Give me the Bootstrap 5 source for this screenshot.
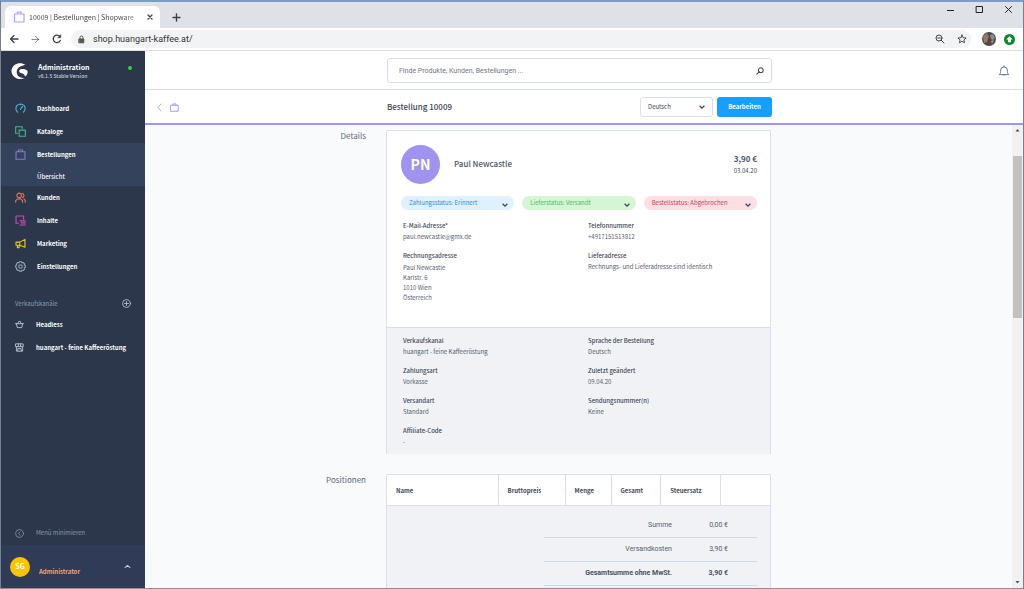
<!DOCTYPE html>
<html lang="de">
<head>
<meta charset="utf-8">
<meta name="viewport" content="width=device-width, initial-scale=1">
<title>10009 | Bestellungen | Shopware</title>
<link rel="stylesheet" href="https://cdn.jsdelivr.net/npm/bootstrap@5.3.0/dist/css/bootstrap.min.css">
<style>
:root { --ink: #3d4758; --muted-ink: #566070; --line: #d8dfe8; --violet: #a092f0; --navy: #2c374c; }
html { height: 100%; }
body { height: 100%; margin: 0; overflow: hidden; font: 400 6px/11px "Noto Sans CJK JP", "Open Sans", sans-serif; color: var(--ink); background: #fff; border: 1px solid #73808f; border-top: 2px solid #7b9cc4; border-bottom-color: #8d8f92; fill: none; stroke: currentColor; stroke-linecap: round; stroke-linejoin: round; }
a { color: inherit; text-decoration: none; }
button { background: none; border: 0; padding: 0; color: inherit; font: inherit; line-height: 1; }
svg { display: block; }
.chrome-ui { font-family: Roboto, sans-serif; color: #3c4043; }
.tabstrip { height: 26px; background: #dee1e6; padding-left: 4px; }
.browser-tab { width: 155px; height: 22px; background: #fff; border-radius: 6px 6px 0 0; padding: 0 7px 0 8px; }
.tab-title { font: 7px/12px "Noto Sans CJK JP", sans-serif; padding-left: 4px; color: #45484c; -webkit-mask-image: linear-gradient(90deg, #000 82%, rgba(0,0,0,.3)); mask-image: linear-gradient(90deg, #000 82%, rgba(0,0,0,.3)); }
.win-controls { gap: 20px; padding: 3px 10px 0 0; color: #222; }
.toolbar { height: 23px; padding: 0 8px 0 8px; border-bottom: 1px solid #dcdde0; }
.address { height: 18px; border-radius: 9px; background: #f1f3f4; padding: 0 4px 0 7px; margin: 0 11px 0 9px; }
.address input { font-size: 9px; line-height: 14px; color: #333; background: none; border: 0; padding: 0; outline: 0; }
.sidebar { width: 144px; background: var(--navy); color: #fff; font-weight: 700; flex: none; }
.brand { height: 46px; padding: 11px 13px 0 10px; gap: 10px; }
.brand-name { font-size: 7px; line-height: 10px; }
.version { font-size: 5px; line-height: 7px; font-weight: 500; color: #c6cfdb; }
.online { width: 4px; height: 4px; border-radius: 50%; background: #37d046; margin-top: 4px; }
.menu a { display: flex; align-items: center; height: 23px; padding-left: 14px; gap: 11px; }
.menu a svg { width: 11px; height: 11px; stroke-width: 1.6; }
.menu .current { background: #35425b; }
.menu .current .sub { height: 20px; padding-left: 36px; font-weight: 500; }
.channels { margin-top: 16px; }
.channels-head { height: 19px; padding: 0 14px; color: #8a9cb3; font-weight: 400; }
.channels .menu a svg { width: 9px; height: 9px; }
.channels .menu a { gap: 12px; }
.minimize { height: 24px; padding-left: 14px; color: #8a97aa; }
.userbar { height: 43px; background: #303b57; padding: 0 14px 0 9px; }
.user-badge { width: 20px; height: 20px; border-radius: 50%; background: #fcc400; font-size: 7px; }
.user-role { color: #f0a373; font-weight: 700; padding: 9px 0 0 9px; }
.split { display: grid; grid-template-columns: minmax(60px, 1fr) minmax(0, 385px) minmax(20px, 1fr); }
.head-row { padding-right: 9px; align-items: center; }
.searchbar { height: 41px; padding-top: 1px; border-bottom: 1px solid var(--line); }
.search-box { height: 25px; border: 1px solid var(--line); border-radius: 3px; padding: 0 7px 0 11px; }
.search-box input { border: 0; outline: 0; padding: 0; background: none; font: 7px/12px Roboto, sans-serif; color: var(--ink); }
.search-box input::placeholder { color: #6e7784; opacity: 1; }
.pagebar { height: 36px; padding-top: 1px; border-bottom: 2px solid var(--violet); }
.page-title { font-size: 8px; line-height: 12px; font-weight: 500; margin: 0; }
.form-select { background-image: url("data:image/svg+xml,%3Csvg xmlns='http://www.w3.org/2000/svg' viewBox='0 0 10 10'%3E%3Cpath d='M2 3.5l3 3 3-3' fill='none' stroke='%233d4758' stroke-width='1.6'/%3E%3C/svg%3E"); background-size: 8px 8px; font: inherit; color: inherit; line-height: 10px; box-shadow: none; }
.lang { width: 73px; height: 20px; border: 1px solid var(--line); border-radius: 3px; padding: 0 12px 1px 7px; background-position: right 6px center; }
.btn-edit { width: 55px; height: 20px; border-radius: 3px; background: #189eff; color: #fff; font-weight: 700; }
.canvas { background: #f9fafc; }
.side-label { font-size: 8px; line-height: 12px; text-align: right; padding-right: 20px; color: #5b6778; margin: 0; font-weight: 400; }
.sections { display: flex; flex-direction: column; gap: 20px; padding-top: 5px; }
.panel { border: 1px solid var(--line); border-bottom: 0; border-radius: 2px 2px 0 0; background: #fff; }
.customer { padding: 14px 13px 0 14px; }
.avatar { width: 39px; height: 39px; border-radius: 50%; background: var(--violet); color: #fff; font-size: 14px; line-height: 20px; font-weight: 700; }
.customer-name { font-size: 8px; line-height: 12px; font-weight: 500; padding-left: 14px; color: #4a5567; }
.amount { font-size: 8px; line-height: 12px; font-weight: 700; color: #4a5567; }
.status-row { display: grid; grid-template-columns: repeat(3, 1fr); gap: 8px; margin-top: 12px; }
.status { height: 14px; border: 0; border-radius: 7px; padding: 0 14px 0 8px; background-position: right 5px top 5px; line-height: 14px; }
.st-open { background-color: #dff1fe; color: #2e8edc; }
.st-done { background-color: #d5f5d7; color: #4dbb62; }
.st-cancel { background-color: #fbdfe4; color: #cc3d55; }
.facts { display: grid; grid-template-columns: 1fr 1fr; gap: 8px 3px; margin: 0; padding-left: 16px; color: var(--muted-ink); }
.facts dt { font-weight: 500; color: var(--ink); }
.facts dd { margin: 0; }
.facts-main { padding-top: 10px; padding-bottom: 24px; }
.facts-more { padding-top: 7px; padding-bottom: 7px; background: #f0f2f5; border-top: 1px solid var(--line); }
.postal { line-height: 10px; padding-top: 2px; }
.positions th { font-weight: 700; height: 31px; padding: 0 0 0 9px; vertical-align: middle; border-right: 1px solid var(--line); border-bottom: 1px solid var(--line); }
.positions th:last-child { border-right: 0; }
.sums-area { background: #f0f2f5; padding: 7px 13px 24px 0; }
.sums { width: 213px; text-align: right; font: 7px/12px Roboto, sans-serif; color: var(--muted-ink); }
.sums th, .sums td { height: 24px; padding: 0; vertical-align: middle; border-bottom: 1px solid #cfd7e1; font-weight: inherit; }
.sums td { width: 85px; padding-right: 29px; }
.sums .total { font-weight: 700; color: #465164; }
.scroll-track { width: 11px; background: #f1f1f1; flex: none; color: #505050; }
.scroll-thumb { width: 9px; background: #c1c1c1; }
</style>
<script src="https://cdn.jsdelivr.net/npm/bootstrap@5.3.0/dist/js/bootstrap.bundle.min.js" defer></script>
</head>
<body class="d-flex flex-column">
<header class="chrome-ui">
  <div class="tabstrip d-flex">
    <div class="browser-tab d-flex align-items-center align-self-end">
      <svg width="12" height="12" viewBox="0 0 12 12" stroke="#b0a3ee" stroke-width="1.200" class="flex-shrink-0"><path d="M1.500 3h9.500v8H1.500zM4.200 3V1.200h4V3"/></svg>
      <span class="tab-title flex-grow-1 text-nowrap">10009 | Bestellungen | Shopware</span>
      <button class="ms-1" aria-label="Tab schließen"><svg width="6" height="6" viewBox="0 0 6 6" stroke-width="1.300"><path d="M1 1l4 4M5 1L1 5"/></svg></button>
    </div>
    <button class="ms-2 ps-1 pt-1" aria-label="Neuer Tab"><svg width="9" height="9" viewBox="0 0 9 9" stroke-width="1.400"><path d="M4.500 1v7M1 4.500h7"/></svg></button>
    <div class="win-controls d-flex ms-auto align-items-start">
      <button aria-label="Minimieren"><svg width="9" height="9" viewBox="0 0 9 9" stroke-linecap="butt"><path d="M1 5.500h7"/></svg></button>
      <button aria-label="Maximieren"><svg width="9" height="9" viewBox="0 0 9 9"><path d="M1.500 1.500h6v6h-6z"/></svg></button>
      <button aria-label="Schließen"><svg width="9" height="9" viewBox="0 0 9 9"><path d="M1.500 1.500l6 6M7.500 1.500l-6 6"/></svg></button>
    </div>
  </div>
  <div class="toolbar d-flex align-items-center">
    <button aria-label="Zurück"><svg width="10" height="10" viewBox="0 0 10 10" stroke-width="1.300"><path d="M9 5H1.500M5 1.500L1.500 5 5 8.500"/></svg></button>
    <button class="ms-2 ps-1 text-black-50" aria-label="Vor"><svg width="9" height="9" viewBox="0 0 10 10" stroke-width="1"><path d="M1 5h7.500M5 1.500L8.500 5 5 8.500"/></svg></button>
    <button class="ms-2 ps-1" aria-label="Neu laden"><svg width="10" height="10" viewBox="0 0 10 10" stroke-width="1.300"><path d="M8.300 6.500A3.700 3.700 0 1 1 7.800 2.500"/><path d="M8.800.8v3h-3z" fill="currentColor" stroke-width=".4"/></svg></button>
    <div class="address d-flex align-items-center flex-grow-1">
      <svg width="7" height="9" viewBox="0 0 7 9" stroke="#555"><path d="M1.200 4h4.600v3.800H1.200z" fill="#555"/><path d="M2 4V2.500a1.500 1.500 0 0 1 3 0V4"/></svg>
      <input class="flex-grow-1 ms-1 ps-1" type="text" value="shop.huangart-kaffee.at/" aria-label="Adresse">
      <button aria-label="Zoom"><svg width="10" height="10" viewBox="0 0 10 10"><circle cx="4" cy="4" r="3"/><path d="M6.300 6.300L9 9M2.800 4h2.400"/></svg></button>
      <button class="ms-2 ps-1" aria-label="Lesezeichen"><svg width="10" height="10" viewBox="0 0 10 10" stroke-width=".9"><path d="M5 1l1.200 2.700 2.900.3-2.200 1.900.7 2.900L5 7.300 2.400 8.800l.7-2.900L.9 4l2.900-.3z"/></svg></button>
    </div>
    <svg width="14" height="14" viewBox="0 0 14 14" stroke="none"><circle cx="7" cy="7" r="7" fill="#4b4c4a"/><path d="M1 4l4-3 2 4-2 5-3 1z" fill="#927b6b"/><path d="M8 3l3-1 2 4-2 2-2-1z" fill="#7895a6"/><path d="M6 6l2-1 2 5-2 3H5z" fill="#6c3f36"/><path d="M9 9l3-1-2 4z" fill="#a79a8a"/></svg>
    <svg class="ms-2" width="11" height="11" viewBox="0 0 11 11" stroke="none"><circle cx="5.500" cy="5.500" r="5.500" fill="#0b8a2c"/><path d="M5.500 2.300L8.700 5.500H7v2.800H4V5.500H2.300z" fill="#fff"/></svg>
  </div>
</header>
<div class="d-flex flex-grow-1 overflow-hidden">
  <aside class="sidebar d-flex flex-column">
    <div class="brand d-flex align-items-start">
      <svg width="17" height="18" viewBox="0 0 34 36" fill="#fff" stroke="none"><path d="M29 6C23 1 13 1 7 6-1 12-1 24 7 30c6 5 14 5 20 2-7 0-13-2-15-8-2-7 1-13 9-16 3-1 6-2 8-2z"/><path d="M33 18c-3-4-11-5-15-3-3 2-2 6 2 7 4 1 7 2 8 7 4-2 6-7 5-11z"/></svg>
      <div class="flex-grow-1"><div class="brand-name">Administration</div><div class="version">v6.1.5 Stable Version</div></div>
      <span class="online"></span>
    </div>
    <nav class="menu">
      <a href="#"><svg viewBox="0 0 16 16" stroke="#4db3cf"><path d="M4 13.500a6.700 6.700 0 1 1 8 0M8 9l3-4M8 1.500v1"/></svg>Dashboard</a>
      <a href="#"><svg viewBox="0 0 16 16" stroke="#3fb98c"><path d="M6 6h9v9H6zM3.500 10.500H1V1h9.500v2.500"/></svg>Kataloge</a>
      <div class="current">
        <a href="#"><svg viewBox="0 0 16 16" stroke="#8579cf"><path d="M1.500 4h13v11h-13zM5 4V1.500h6V4"/></svg>Bestellungen</a>
        <a href="#" class="sub">Übersicht</a>
      </div>
      <a href="#"><svg viewBox="0 0 16 16" stroke="#e5755a"><circle cx="6" cy="5" r="3.300"/><path d="M1 15v-2.500l3-2.500h4l3 2.500V15M10.500 1.800a3.300 3.300 0 0 1 .5 6.200M13 10l2 2.500V15"/></svg>Kunden</a>
      <a href="#"><svg viewBox="0 0 16 16" stroke="#c44fb0"><path d="M5 12H1.500V1.500h11V6M7.500 8.500H15M9 11.500h6M7.500 14.500H15"/></svg>Inhalte</a>
      <a href="#"><svg viewBox="0 0 16 16" stroke="#e3cd1c"><path d="M14.500 2v11.500L7 10.500H1.500V6H7zM7 6v4.500M3.500 10.500V14H6v-3.500"/></svg>Marketing</a>
      <a href="#"><svg viewBox="0 0 16 16" stroke="#93a4ba" stroke-width="1.300"><circle cx="8" cy="8" r="2.500"/><path d="M6.500 1h3l.6 1.600 1.700-.5 2.100 2.100-.5 1.700 1.600.6v3l-1.600.6.5 1.700-2.100 2.100-1.700-.5-.6 1.600h-3l-.6-1.600-1.700.5-2.100-2.100.5-1.700L1 9.500v-3l1.600-.6-.5-1.700 2.100-2.100 1.700.5z"/></svg>Einstellungen</a>
    </nav>
    <div class="channels">
      <div class="channels-head d-flex align-items-center justify-content-between">Verkaufskanäle
        <button aria-label="Verkaufskanal hinzufügen"><svg width="9" height="9" viewBox="0 0 16 16" stroke="#b9c5d3" stroke-width="1.500"><circle cx="8" cy="8" r="7"/><path d="M8 4.500v7M4.500 8h7"/></svg></button></div>
      <nav class="menu">
        <a href="#"><svg viewBox="0 0 16 16" stroke="#b9c5d3"><path d="M1 6.500h14M2.500 6.500L4 13.500h8l1.500-7M5 6.500l1.500-4h3l1.500 4"/></svg>Headless</a>
        <a href="#"><svg viewBox="0 0 16 16" stroke="#b9c5d3"><path d="M1.500 1.500h13v5h-13zM2.500 6.500v8h11v-8M6 1.500v5M10 1.500v5M5 14V10h6v4"/></svg>huangart - feine Kaffeeröstung</a>
      </nav>
    </div>
    <button class="minimize d-flex align-items-center mt-auto gap-2"><svg width="9" height="9" viewBox="0 0 16 16" stroke-width="1.400"><circle cx="8" cy="8" r="7"/><path d="M9 5L6.500 8 9 11"/></svg><span class="fw-normal ps-1">Menü minimieren</span></button>
    <div class="userbar d-flex align-items-center">
      <span class="user-badge d-flex align-items-center justify-content-center">SG</span>
      <span class="user-role">Administrator</span>
      <button class="ms-auto" aria-label="Benutzermenü"><svg width="7" height="7" viewBox="0 0 10 10" stroke="#c3cbd8" stroke-width="1.500"><path d="M1.500 6.500L5 3.500l3.500 3"/></svg></button>
    </div>
  </aside>
  <main class="flex-grow-1 d-flex flex-column overflow-hidden">
    <div class="searchbar split head-row">
      <span></span>
      <label class="search-box d-flex align-items-center">
        <input class="flex-grow-1" type="search" placeholder="Finde Produkte, Kunden, Bestellungen ..." aria-label="Suche">
        <svg width="8" height="8" viewBox="0 0 10 10" stroke-width="1.300"><circle cx="6" cy="4" r="3"/><path d="M3.800 6.200L1 9"/></svg>
      </label>
      <button class="ms-auto pe-1" aria-label="Benachrichtigungen"><svg width="12" height="12" viewBox="0 0 16 16" stroke="#66758a" stroke-width="1.300"><path d="M2 12.500c1.500-1.500 1.500-3 1.500-5.500a4.500 4.500 0 0 1 9 0c0 2.500 0 4 1.500 5.500zM6.500 12.500a1.600 1.600 0 0 0 3 0M8 2.500V1"/></svg></button>
    </div>
    <div class="pagebar split head-row">
      <div class="d-flex gap-2 ps-2 ms-1">
        <a href="#" aria-label="Zurück"><svg width="5" height="9" viewBox="0 0 5 9" stroke="#a9b0dc"><path d="M4 1L1 4.500 4 8"/></svg></a>
        <a href="#" aria-label="Bestellungen"><svg width="9" height="9" viewBox="0 0 12 12" stroke="#a092f0" stroke-width="1.200"><path d="M1 3h10v8H1zM4 3V1.200h4V3"/></svg></a>
      </div>
      <div class="d-flex align-items-center">
        <h1 class="page-title me-auto">Bestellung 10009</h1>
        <select class="form-select lang me-1" aria-label="Sprache"><option>Deutsch</option></select>
        <button class="btn-edit">Bearbeiten</button>
      </div>
    </div>
    <div class="canvas d-flex flex-grow-1 overflow-hidden">
      <div class="sections flex-grow-1">
        <section class="split">
          <h2 class="side-label">Details</h2>
          <div class="panel">
            <div class="customer">
              <div class="d-flex align-items-center">
                <span class="avatar d-flex align-items-center justify-content-center">PN</span>
                <span class="customer-name me-auto">Paul Newcastle</span>
                <div class="text-end"><div class="amount">3,90 €</div><div>03.04.20</div></div>
              </div>
              <div class="status-row">
                <select class="form-select status st-open" aria-label="Zahlungsstatus"><option>Zahlungsstatus: Erinnert</option></select>
                <select class="form-select status st-done" aria-label="Lieferstatus"><option>Lieferstatus: Versandt</option></select>
                <select class="form-select status st-cancel" aria-label="Bestellstatus"><option>Bestellstatus: Abgebrochen</option></select>
              </div>
            </div>
            <dl class="facts facts-main">
              <div><dt>E-Mail-Adresse*</dt><dd>paul.newcastle@gmx.de</dd></div>
              <div><dt>Telefonnummer</dt><dd>+4917151513812</dd></div>
              <div><dt>Rechnungsadresse</dt><dd class="postal">Paul Newcastle<br>Karlstr. 6<br>1010 Wien<br>Österreich</dd></div>
              <div><dt>Lieferadresse</dt><dd>Rechnungs- und Lieferadresse sind identisch</dd></div>
            </dl>
            <dl class="facts facts-more">
              <div><dt>Verkaufskanal</dt><dd>huangart - feine Kaffeeröstung</dd></div>
              <div><dt>Sprache der Bestellung</dt><dd>Deutsch</dd></div>
              <div><dt>Zahlungsart</dt><dd>Vorkasse</dd></div>
              <div><dt>Zuletzt geändert</dt><dd>09.04.20</dd></div>
              <div><dt>Versandart</dt><dd>Standard</dd></div>
              <div><dt>Sendungsnummer(n)</dt><dd>Keine</dd></div>
              <div><dt>Affiliate-Code</dt><dd>-</dd></div>
            </dl>
          </div>
        </section>
        <section class="split">
          <h2 class="side-label">Positionen</h2>
          <div class="panel">
            <table class="positions w-100">
              <colgroup><col style="width:29%"><col style="width:17.5%"><col style="width:12%"><col style="width:13%"><col style="width:15.500%"><col></colgroup>
              <thead><tr><th scope="col">Name</th><th scope="col">Bruttopreis</th><th scope="col">Menge</th><th scope="col">Gesamt</th><th scope="col">Steuersatz</th><th scope="col" aria-label="Aktionen"></th></tr></thead>
            </table>
            <div class="sums-area">
              <table class="sums ms-auto">
                <tbody>
                  <tr><th scope="row">Summe</th><td>0,00 €</td></tr>
                  <tr><th scope="row">Versandkosten</th><td>3,90 €</td></tr>
                  <tr class="total"><th scope="row">Gesamtsumme ohne MwSt.</th><td>3,90 €</td></tr>
                </tbody>
              </table>
            </div>
          </div>
        </section>
      </div>
      <div class="scroll-track d-flex flex-column align-items-center">
        <svg width="9" height="31" viewBox="0 0 9 31" stroke="none"><path d="M2.500 6.500h4L4.500 4z" fill="currentColor"/></svg>
        <div class="scroll-thumb" style="height:35%"></div>
        <svg class="mt-auto" width="9" height="12" viewBox="0 0 9 12" stroke="none"><path d="M2.500 5h4l-2 2.500z" fill="currentColor"/></svg>
      </div>
    </div>
  </main>
</div>
</body>
</html>
